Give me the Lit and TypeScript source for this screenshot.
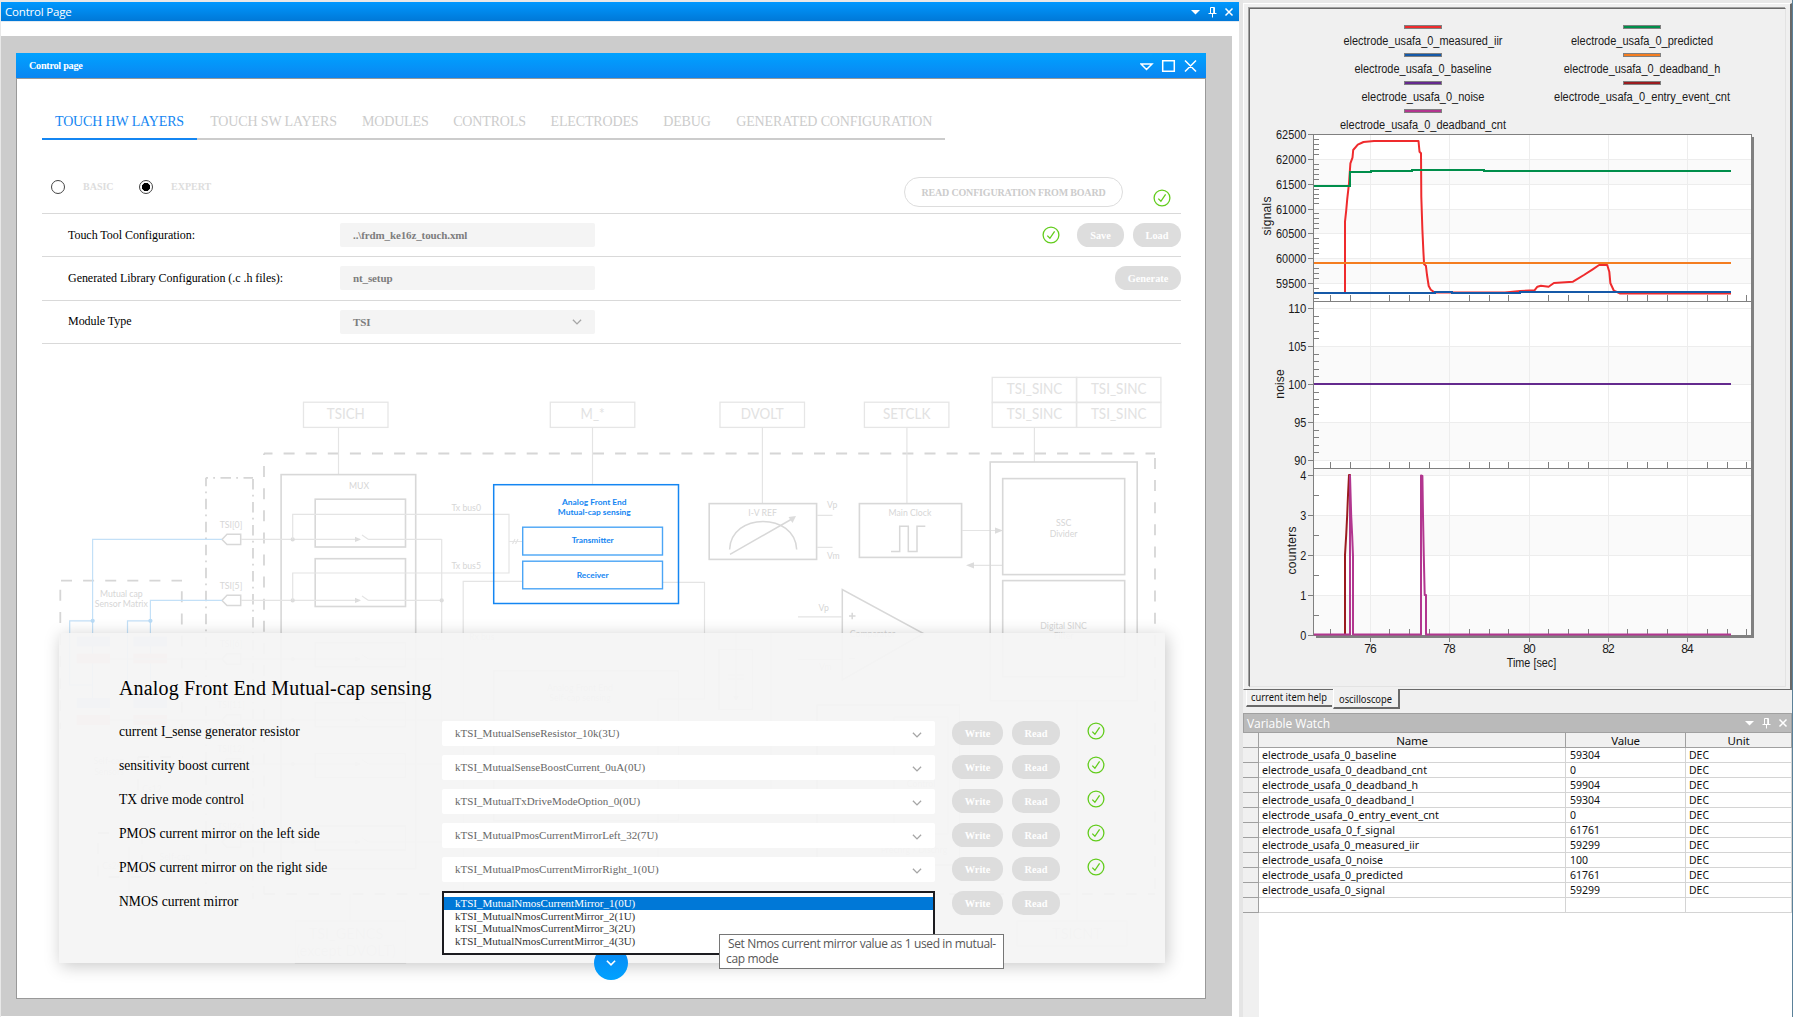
import { LitElement, html, svg, css } from "lit";
import { customElement } from "lit/decorators.js";

const TABS: [string, number][] = [
  ["TOUCH HW LAYERS", 155],
  ["TOUCH SW LAYERS", 153],
  ["MODULES", 90.5],
  ["CONTROLS", 98],
  ["ELECTRODES", 112],
  ["DEBUG", 73],
  ["GENERATED CONFIGURATION", 221.5],
];

const PARAMS = [
  ["current I_sense generator resistor", "kTSI_MutualSenseResistor_10k(3U)"],
  ["sensitivity boost current", "kTSI_MutualSenseBoostCurrent_0uA(0U)"],
  ["TX drive mode control", "kTSI_MutualTxDriveModeOption_0(0U)"],
  ["PMOS current mirror on the left side", "kTSI_MutualPmosCurrentMirrorLeft_32(7U)"],
  ["PMOS current mirror on the right side", "kTSI_MutualPmosCurrentMirrorRight_1(0U)"],
];

const OPTIONS = [1, 2, 3, 4].map((n) => `kTSI_MutualNmosCurrentMirror_${n}(${n - 1}U)`);

const WATCH = [
  ["electrode_usafa_0_baseline", "59304", 134.4],
  ["electrode_usafa_0_deadband_cnt", "0", 165],
  ["electrode_usafa_0_deadband_h", "59904", 156],
  ["electrode_usafa_0_deadband_l", "59304", 152],
  ["electrode_usafa_0_entry_event_cnt", "0", 177],
  ["electrode_usafa_0_f_signal", "61761", 133],
  ["electrode_usafa_0_measured_iir", "59299", 157],
  ["electrode_usafa_0_noise", "100", 121],
  ["electrode_usafa_0_predicted", "61761", 141],
  ["electrode_usafa_0_signal", "59299", 123],
] as [string, string, number][];

const check = html`<svg class="check" width="18" height="18" viewBox="0 0 18 18">
  <circle cx="9" cy="9" r="7.9" /><path d="M5.3 9.6 7.9 12.3 12.6 5.3" />
</svg>`;

const chevron = html`<svg class="chevron" width="12" height="8" viewBox="0 0 12 8"><path d="M1.900 1.700 6 5.900 10.100 1.700" /></svg>`;

const dockIcons = html`<svg class="dock-icons" width="44" height="12" viewBox="0 0 44 12">
  <path class="solid" d="M0 4H9L4.500 8.500Z" />
  <path d="M19.500 7V1.500H23.500V7M17.500 7.500H25.500M21.500 7.500V11.500M22.700 2V7" />
  <path class="cross" d="M34.500 2.500 41.500 9.500M41.500 2.500 34.500 9.500" />
</svg>`;

@customElement("block-diagram")
export class BlockDiagram extends LitElement {
  static styles = css`
    :host { display: block; }
    svg { display: block; font-family: Lato, "Open Sans", sans-serif; }
    .tag { fill: none; stroke: #e6e6e6; stroke-width: 1.3; }
    .box { fill: none; stroke: #d8d8d8; stroke-width: 1.6; }
    .wire { fill: none; stroke: #e4e4e4; stroke-width: 1.2; }
    .blue { fill: none; stroke: #c3e0f7; stroke-width: 1.2; }
    .dot { fill: #dcdcdc; }
    .bdot { fill: #b9dbf6; }
    .dash { fill: none; stroke: #d6d6d6; stroke-width: 1.8; stroke-dasharray: 11 11.1; }
    .dashdot { fill: none; stroke: #d6d6d6; stroke-width: 1.8; stroke-dasharray: 10.5 5.2 1.8 5.5; }
    .big { font-size: 14.500px; fill: #e2e2e2; text-anchor: middle; }
    .small { font-size: 8.700px; fill: #d6d6d6; text-anchor: middle; }
    .left { font-size: 8.700px; fill: #d6d6d6; }
    .afe { fill: #fff; fill-opacity: 0; stroke: #1486f2; stroke-width: 1.5; }
    .afe-in { fill: #fff; stroke: #4ba5f6; stroke-width: 1.4; }
    .afe-text { font-size: 8.200px; font-weight: 700; fill: #1486f2; text-anchor: middle; }
    .blue-pad { fill: #cfe0f5; }
    .red-pad { fill: #fad2d2; }
    .shape { fill: none; stroke: #d8d8d8; stroke-width: 1.5; }
  `;

  private tag(x: number, y: number, label: string, w: number) {
    return svg`<rect class="tag" x=${x} y=${y} width="84.500" height="25.200" />
      <text class="big" x=${x + 42.3} y=${y + 17} textLength=${w} lengthAdjust="spacingAndGlyphs">${label}</text>`;
  }

  private pin(y: number, label: string, wireEnd = 441.7) {
    return svg`<text class="small" x="231" y=${y - 11.8}>${label}</text>
      <path class="shape" d=${`M222 ${y}L227 ${y - 5.2}H240.700V${y + 5.2}H227Z`} />
      <path class="wire" d=${`M241 ${y}H360M368.500 ${y}H${wireEnd}M368.500 ${y}L362 ${y - 4.3}`} />
      <path class="dot" d=${`M355 ${y - 2.6}L361 ${y}L355 ${y + 2.6}Z`} />
      <circle class="dot" cx="292.700" cy=${y} r="2.100" />`;
  }

  render() {
    return html`<svg width="1188" height="640" viewBox="17 345 1188 640">
      <path class="dash" stroke-dashoffset="2.500" d="M264 454.500H1155" />
      <path class="dash" stroke-dashoffset="9.500" d="M264 454.500V895" />
      <path class="dash" stroke-dashoffset="17.600" d="M1155 454.500V895" />
      <path class="dash" d="M264 895H1155" />
      <path class="dashdot" stroke-dashoffset="2" d="M206 478.800V900" />
      <path class="dashdot" stroke-dashoffset="8.500" d="M206 478.800H253" />
      <path class="dashdot" stroke-dashoffset="0" d="M253 480V900" />
      <path class="dash" d="M61 581.700H182" />
      <path class="dash" stroke-dashoffset="13" d="M60.300 581.700V730" />
      <path class="dash" stroke-dashoffset="11.500" d="M181.800 581.700V730" />

      ${this.tag(303.5, 403.2, "TSICH", 38)}
      ${this.tag(550.3, 403.2, "M_*", 24)}
      ${this.tag(720, 403.2, "DVOLT", 43)}
      ${this.tag(864.4, 403.2, "SETCLK", 47.5)}
      ${this.tag(992.2, 403.2, "TSI_SINC", 55.5)}
      ${this.tag(1076.4, 403.2, "TSI_SINC", 55.5)}
      ${this.tag(992.2, 378.4, "TSI_SINC", 55.5)}
      ${this.tag(1076.4, 378.4, "TSI_SINC", 55.5)}
      <path class="wire" d="M338.500 428.500V475M592.500 428.500V485M762.400 428.500V504M906.900 428.500V504M1034.400 428.500V463" />

      <rect class="box" x="281.100" y="475.600" width="134.600" height="394" />
      <text class="small" x="359" y="490">MUX</text>
      <rect class="box" x="315.200" y="500.200" width="90.300" height="47.800" />
      <rect class="box" x="315.200" y="559.700" width="90.300" height="47.800" />
      <rect class="box" x="315.200" y="643.600" width="90.300" height="24" />
      <rect class="box" x="315.200" y="703.600" width="90.300" height="24" />
      <rect class="box" x="315.200" y="754.500" width="90.300" height="24" />
      <rect class="box" x="315.200" y="827" width="90.300" height="24" />
      ${this.pin(540.4, "TSI[0]")}
      ${this.pin(601.4, "TSI[5]")}
      ${this.pin(660, "TSI[6]", 444)}
      ${this.pin(721, "TSI[11]", 510)}
      ${this.pin(765, "TSI[12]", 500)}
      ${this.pin(843, "TSI[24]", 460)}
      <path class="wire" d="M292.700 540V515.400H509V574H292.700V601M509 542.500H522M512.500 545L515 540M515.500 545L518 540M441.700 540V727M463.200 900V582.300H522M662.600 583.400H704.500V700H658V870" />
      <circle class="dot" cx="441.700" cy="601.400" r="2.100" />
      <text class="left" x="451.500" y="512.200">Tx bus0</text>
      <text class="left" x="451.500" y="569.600">Tx bus5</text>
      <text class="left" x="469" y="641">Rx bus</text>

      <path class="blue" d="M222 540.400H92.600V700M92.600 621.800H69.700V686H92M222 601.400H150.400V700M150.400 621.800H127.500V686" />
      <circle class="bdot" cx="92.700" cy="621.800" r="2.100" />
      <circle class="bdot" cx="150.400" cy="621.800" r="2.100" />
      <text class="small" x="121.300" y="597.700">Mutual cap</text>
      <text class="small" x="121.300" y="607.700">Sensor Matrix</text>
      ${[76.6, 133.4].map((x) => svg`
        <rect class="blue-pad" x=${x} y="637.500" width="33.500" height="10" />
        <rect class="red-pad" x=${x} y="654.500" width="33.500" height="10" />
        <rect class="blue-pad" x=${x} y="699" width="33.500" height="10" />
        <rect class="red-pad" x=${x} y="716" width="33.500" height="10" />`)}
      <path class="wire" d="M110 660H222M110 721H222M163 765H222M330 870H408M129 848V893" />
      <text class="small" x="109" y="765">Self-cap</text>
      <text class="small" x="109" y="776">Sensors</text>
      <text class="small" x="152" y="793">Cs12</text>
      <text class="small" x="175" y="861">Self-cap</text>
      <text class="small" x="112" y="870">Cs24</text>
      <path class="dash" d="M138 758H183M138 758V800M98 834H142V878H98Z" />

      <rect class="afe" x="493.700" y="485.700" width="184.800" height="118.800" />
      <rect class="afe-in" x="522.700" y="528.200" width="139.800" height="27.800" />
      <rect class="afe-in" x="522.700" y="562.200" width="139.800" height="27.600" />
      <text class="afe-text" x="594.300" y="505.600" textLength="64.500" lengthAdjust="spacingAndGlyphs">Analog Front End</text>
      <text class="afe-text" x="594.300" y="516" textLength="73" lengthAdjust="spacingAndGlyphs">Mutual-cap sensing</text>
      <text class="afe-text" x="592.700" y="544.400" textLength="42" lengthAdjust="spacingAndGlyphs">Transmitter</text>
      <text class="afe-text" x="592.700" y="578.700" textLength="32" lengthAdjust="spacingAndGlyphs">Receiver</text>
      <rect class="box" x="493.700" y="671.700" width="184.800" height="150" />
      <text class="small" x="580" y="692">Analog Front End</text>
      <text class="small" x="580" y="702">Self-cap sensing</text>

      <rect class="box" x="709.200" y="504.600" width="107.400" height="55.800" />
      <text class="small" x="762.600" y="517">I-V REF</text>
      <path class="shape" d="M729.600 550.500C731 513 795 513 796.700 550.500M730 555.300L791 520.500" />
      <path class="dot" d="M796 517L792.500 524L788.500 518Z" />
      <path class="wire" d="M817 516.400H832.500M817 548.400H832.500" />
      <text class="left" x="827" y="508.500">Vp</text>
      <text class="left" x="827" y="560">Vm</text>

      <rect class="box" x="859.400" y="504.600" width="102.200" height="53.800" />
      <text class="small" x="910" y="517">Main Clock</text>
      <path class="shape" d="M891 552.500H899.700V527.300H908.300V552.500H917V527.300H925.300" />
      <path class="wire" d="M962 531.500H996M974 566.300H1003" />
      <path class="dot" d="M1003 531.500L995 528.500V534.800ZM966 566.300L974 563.200V569.500Z" />

      <path class="shape" d="M842.300 590.500V681L923.500 634.500Z" />
      <path class="wire" d="M798 617.800H842M798 660.500H842" />
      <path class="shape" d="M849 617H855.500M852.200 613.800V620.300M849 659.500H855" />
      <text class="left" x="818.500" y="611.500">Vp</text>
      <text class="left" x="819" y="671">Vm</text>
      <text class="small" x="872.500" y="638.300">Comparator</text>

      <rect class="box" x="990.200" y="463" width="147" height="238.700" />
      <rect class="box" x="1002.700" y="479.600" width="122" height="96" />
      <rect class="box" x="1002.700" y="581.600" width="122" height="96" />
      <text class="small" x="1063.600" y="527.200">SSC</text>
      <text class="small" x="1063.600" y="537.500">Divider</text>
      <text class="small" x="1063.600" y="629.800">Digital SINC</text>
      <text class="small" x="1063.600" y="640">Filter</text>

      <rect class="box" x="719" y="650.500" width="33.500" height="60" />
      <path class="wire" d="M736 634V698M728 676H744M728 680H744M771 634V800M1077 702V922M350 895V922" />
      <path class="dot" d="M733 697H739L736 702Z" />
      <rect class="box" x="817" y="706" width="142.500" height="160" />
      <rect class="wire" x="894" y="718" width="54" height="117" />
      <text class="small" x="921" y="788">Control</text>
      <text class="small" x="914" y="854">Prechrg / Dischrg</text>
      <rect class="tag" x="295.500" y="922" width="110" height="42" />
      <text class="big" x="346" y="939.500">TSI_GENCS</text>
      <text class="big" x="346" y="956.500">(except DVOLT)</text>
      <rect class="tag" x="1017" y="922" width="110" height="25" />
      <text class="big" x="1077" y="939.500">TSICNT</text>
    </svg>`;
  }
}

@customElement("scope-chart")
export class ScopeChart extends LitElement {
  static styles = css`
    :host { display: block; }
    svg { display: block; font: 12px "Liberation Sans", Arial, sans-serif; }
    text { fill: #1a1a1a; }
    .mid { text-anchor: middle; }
    .end { text-anchor: end; }
    .plot { fill: #fff; }
    .shade { fill: #808080; }
    .band { fill: #fafafa; }
    .grid { fill: none; stroke: #ededed; shape-rendering: crispEdges; }
    .axis { fill: none; stroke: #808080; shape-rendering: crispEdges; }
    .swatch { stroke: #808080; shape-rendering: crispEdges; }
    .trace { fill: none; stroke-width: 2; stroke-linejoin: round; }
    .flat { shape-rendering: crispEdges; }
  `;

  private legend: [number, number, string, string, number][] = [
    [182.5, 27, "#ef2b2d", "electrode_usafa_0_measured_iir", 159],
    [401.5, 27, "#008e4b", "electrode_usafa_0_predicted", 142],
    [182.5, 55, "#1559a8", "electrode_usafa_0_baseline", 137],
    [401.5, 55, "#f47d20", "electrode_usafa_0_deadband_h", 156.5],
    [182.5, 83, "#642a8e", "electrode_usafa_0_noise", 123],
    [401.5, 83, "#9a1b1f", "electrode_usafa_0_entry_event_cnt", 176],
    [182.5, 111, "#b2368f", "electrode_usafa_0_deadband_cnt", 166],
  ];

  render() {
    const labels: [number, string][] = [
      [134.5, "62500"], [159.5, "62000"], [184.5, "61500"], [209.5, "61000"], [233.5, "60500"], [258.5, "60000"], [283.5, "59500"],
      [308.5, "110"], [346.5, "105"], [384.5, "100"], [422.5, "95"], [460.5, "90"],
      [475.5, "4"], [515.5, "3"], [555.5, "2"], [595.5, "1"], [635.5, "0"],
    ];
    const years: [number, string][] = [[130.5, "76"], [209.5, "78"], [289.5, "80"], [368.5, "82"], [447.5, "84"]];
    const minorY: number[] = [];
    for (let i = 0; i < 34; i++) if (i % 5) minorY.push(134.5 + i * 4.96);
    for (let i = 1; i < 20; i++) if (i % 5) minorY.push(308.5 + i * 7.6);
    minorY.push(495.5, 535.5, 575.5, 615.5);
    const minorX: number[] = [];
    for (let i = 0; i < 22; i++) if ((i + 1) % 4 !== 3) minorX.push(90.5 + i * 19.83);
    const bands = [[159, 25], [209, 24], [258, 25], [346, 38], [422, 38], [469, 6], [515, 40], [595, 40]];
    return html`<svg width="536" height="677" viewBox="10 9 536 677">
      ${this.legend.map(([x, y, color, name, w]) => svg`
        <rect class="swatch" x=${x - 18} y=${y - 1.5} width="37" height="3" fill=${color} />
        <text class="mid" x=${x + 0.5} y=${y + 18} textLength=${w} lengthAdjust="spacingAndGlyphs">${name}</text>`)}
      <path class="shade" d="M511 137H514V638H76V635H511Z" />
      <rect class="plot" x="73.500" y="134.500" width="437.500" height="500.500" />
      ${bands.map(([y, h]) => svg`<rect class="band" x="74" y=${y} width="437" height=${h} />`)}
      ${labels.map(([y]) => svg`<path class="grid" d=${`M74 ${y}H511`} />`)}
      ${years.map(([x]) => svg`<path class="grid" d=${`M${x} 135V635`} />`)}
      <path class="axis" d="M73.500 635V134.500H511.500V635M73.500 301.500H511M73.500 468.500H511M73.500 635.500H511" />
      ${labels.map(([y, t]) => svg`<path class="axis" d=${`M68 ${y}H74`} />
        <text class="end" x="66.300" y=${y + 4.2} textLength=${t.length * 6.05} lengthAdjust="spacingAndGlyphs">${t}</text>`)}
      ${minorY.map((y) => svg`<path class="axis" d=${`M74 ${y}H79`} />`)}
      ${minorX.map((x) => svg`<path class="axis" d=${`M${x} 295V301M${x} 462V468M${x} 629V635`} />`)}
      ${years.map(([x, t]) => svg`<path class="axis" d=${`M${x} 635V642`} /><text class="mid" x=${x} y="653" textLength="12.300">${t}</text>`)}
      <text class="mid" x="291.500" y="667" textLength="49.500" lengthAdjust="spacingAndGlyphs">Time [sec]</text>
      <text class="mid" transform="translate(31 216) rotate(-90)" textLength="39">signals</text>
      <text class="mid" transform="translate(43.500 384) rotate(-90)" textLength="29.500">noise</text>
      <text class="mid" transform="translate(55.500 550.500) rotate(-90)" textLength="48">counters</text>

      <path class="trace" stroke="#ef2b2d" d="M105 293V221.700L106.200 210.700 107.200 199.300 109 183.300 110.400 163.300 112.500 157.700 113.200 150 117.800 144.700 123.500 142 134 141H178.500L179.500 151.700 181 153.300 181.300 196.700 182.400 230 183.400 251.700 184.100 264.300 185.900 265.700 187 275 188.700 286 190.800 289.700 194.700 292.500 265 292.500 280.400 291 294.500 290.300 297.400 286.700 300.900 285.700 308.600 286.700 313.900 283 333 281.700 343.900 275 352.700 269.300 359.100 265H367.200L369.300 271.700 370.400 283.300 373.900 290.700 380.200 293.500H491" />
      <path class="trace flat" stroke="#008e4b" d="M74 186H110V172H131V171H172V170H244V171H491" />
      <path class="trace flat" stroke="#f47d20" d="M74 263H491" />
      <path class="trace flat" stroke="#1559a8" d="M74 293H195V292H212V293H280V292H491" />
      <path class="trace flat" stroke="#642a8e" d="M74 384H491" />
      <path class="trace" stroke="#9a1b1f" d="M105 635V555L106.200 535 107.200 515 108 495 109 475H110V635" />
      <path class="trace" stroke="#b2368f" d="M74 634.500H110V475.500L111.200 516 112.200 536 113 556V634.500H181V475.500L182.400 476 183 516 183.800 556 184.700 595H186V634.500H491" />
    </svg>`;
  }
}

@customElement("app-root")
export class AppRoot extends LitElement {
  static styles = css`
    :host { display: block; width: 1793px; height: 1017px; overflow: hidden; }
    * { box-sizing: border-box; }
    .app { display: grid; grid-template-columns: 1239px 4px 550px; height: 1017px; background: #e5e5e5; }
    .dock { display: flex; flex-direction: column; padding: 2px 0 0 1px; background: #e8e8e8; }
    .bar { display: flex; align-items: center; justify-content: space-between; height: 19px; padding: 0 4px 0 4px; color: #fff; font: 11.500px/19px "Open Sans", "Noto Sans", sans-serif; letter-spacing: -0.190px; background: linear-gradient(#0098ff, #0078d7); }
    .dock-icons { display: block; fill: none; stroke: #fff; stroke-width: 1; }
    .dock-icons .solid { fill: #fff; stroke: none; }
    .dock-icons .cross { stroke-width: 1.500; }
    .dock-body { flex: 1; padding: 14px 7px 1px 0; background: #fff; border-top: 1px solid #e2eaf2; }
    .desk { height: 980px; padding: 17px 26px 17px 15px; background: #ccc; }
    .window { display: flex; flex-direction: column; height: 946px; font-family: "Liberation Serif", "Times New Roman", serif; }
    .win-title { display: flex; justify-content: space-between; align-items: center; height: 25px; padding: 0 9px 0 13px; color: #fff; font-size: 10.200px; font-weight: 700; letter-spacing: -0.270px; background: linear-gradient(#00a2ff, #0a86f2); }
    .win-icons { fill: none; stroke: #fff; stroke-width: 1.500; }
    .win-body { flex: 1; padding: 0 24px 0 25px; border: 1px solid #999; background: #fff; overflow: hidden; }
    .tabs { display: flex; width: 903px; margin-top: 25px; border-bottom: 2px solid #ccc; }
    .tab { flex: none; height: 36px; padding: 9px 0 0; margin-bottom: -2px; border-bottom: 2px solid transparent; font-size: 14px; line-height: 17px; color: #ccc; white-space: nowrap; text-align: center; letter-spacing: -0.150px; }
    .tab.on { color: #1486f2; border-color: #1486f2; }
    .mode { display: flex; height: 73px; align-items: center; padding: 20px 10px 0 9px; font-size: 10px; font-weight: 700; color: #ddd; }
    .radio { flex: none; width: 14px; height: 14px; border: 1px solid #444; border-radius: 50%; background: #fff; }
    .radio.on { background: radial-gradient(circle, #000 3.800px, #fff 4.400px); }
    .mode span { flex: none; width: 74px; padding-left: 18px; }
    .outline { display: flex; align-items: center; justify-content: center; width: 219px; height: 30px; margin: 11px 30px 0 auto; border: 1px solid #ddd; border-radius: 15px; color: #ccc; letter-spacing: -0.170px; }
    .mode .check { margin-top: 23px; }
    .check { display: block; flex: none; fill: none; stroke: #62cc1c; stroke-width: 1.300; }
    .chevron { display: block; fill: none; stroke: #a6a6a6; stroke-width: 1.300; }
    .rows { width: 1139px; border-bottom: 1px solid #d9d9d9; }
    .row { display: grid; grid-template-columns: 272px 255px 1fr; align-items: center; width: 1139px; height: 43.300px; padding-left: 26px; border-top: 1px solid #d9d9d9; font-size: 12px; letter-spacing: -0.040px; }
    .field { display: flex; align-items: center; justify-content: space-between; height: 24px; padding: 0 12px 0 13px; border-radius: 2px; background: #f4f4f4; color: #7d7d7d; font-size: 11px; font-weight: 700; letter-spacing: -0.120px; }
    .acts { display: flex; justify-content: flex-end; align-items: center; gap: 9px; }
    .acts .check { margin-right: 8px; }
    .pill { display: flex; align-items: center; justify-content: center; height: 24px; border-radius: 11.500px; background: #ddd; color: #fff; font-size: 10.300px; font-weight: 700; letter-spacing: 0; }
    .w47 { width: 47px; } .w48 { width: 48px; } .w51 { width: 51px; } .w66 { width: 66px; }
    .stage { display: grid; margin: 0 -24px 0 -25px; width: 1188px; }
    .stage > * { grid-area: 1 / 1; }
    .sheet { width: 1106px; height: 330px; margin: 289px 0 0 42px; padding: 43px 0 0 60px; background: rgba(244, 244, 244, 0.930); box-shadow: 2px 3px 16px rgba(0, 0, 0, 0.220); }
    .sheet h2 { margin: 0; height: 45px; font-size: 20px; line-height: 24px; font-weight: 400; letter-spacing: 0.170px; }
    .param { display: grid; grid-template-columns: 323px 493px 17px 51px 9px 48px 27px 18px; align-items: center; height: 34px; padding-bottom: 9px; font-size: 13.600px; }
    .name { padding-bottom: 2px; }
    .param .field { height: 25px; background: #fff; font-weight: 400; color: #666; letter-spacing: 0.020px; }
    .param .chevron { margin-top: 3px; }
    .param .check { margin-top: -4px; }
    .c4 { grid-column: 4; } .c6 { grid-column: 6; } .c8 { grid-column: 8; }
    .combo { position: relative; height: 25px; }
    .list { position: absolute; left: 0; top: 0; z-index: 3; width: 493px; height: 64px; padding: 4px 0; border: 2px solid #1c1c20; background: #fff; font-size: 11px; line-height: 12.800px; color: #333; }
    .opt { height: 12.800px; padding-left: 11px; }
    .opt.on { background: #0078d7; color: #fff; }
    .tip { position: absolute; left: 277px; top: 43px; z-index: 4; width: 285px; height: 35px; padding: 1px 6px; border: 1px solid #767676; background: #fff; color: #575757; font: 12px/15px "Open Sans", "Noto Sans", sans-serif; letter-spacing: -0.370px; text-indent: 2px; white-space: nowrap; }
    .more { position: absolute; left: 152px; top: 55px; z-index: 2; display: flex; align-items: center; justify-content: center; width: 34px; height: 34px; border-radius: 50%; background: linear-gradient(#0a86f2, #00a2ff); }
    .more .chevron { stroke: #fff; stroke-width: 1.600; margin-top: 1px; }

    .side { display: flex; flex-direction: column; background: #e8e8e8; border-right: 1px solid #5b8199; font-family: "Noto Sans", "Open Sans", sans-serif; }
    .scope { height: 687px; margin-top: 3px; padding: 4px 4px 3px 5px; background: #f0f0f0; border: 1px solid #fff; border-right: 2px solid #696969; border-bottom: 1px solid #696969; }
    .frame { height: 679px; border: 1px solid #696969; box-shadow: -1px -1px #a0a0a0; border-right-color: #e3e3e3; border-bottom-color: #e3e3e3; }
    .sheets { display: flex; height: 23px; padding-left: 3px; background: #f0f0f0; }
    .sheet-tab { width: 86px; height: 17px; padding-left: 4px; border: 1px solid #fff; border-top: 0; border-right: 0; border-bottom: 2px solid #696969; background: #f0f0f0; }
    .sheet-tab.on { width: 67px; height: 20px; margin-top: -1px; padding-left: 5px; border-right: 2px solid #696969; margin-left: 1px; padding-top: 3px; }
    .t { display: block; overflow: visible; }
    .t text { font-family: "Noto Sans", "Open Sans", sans-serif; font-size: 11.500px; fill: #111; }
    .watch-bar { height: 20px; padding: 0 2px 0 3px; border: 1px solid #a0a0a0; background: #bababa; font-size: 12px; letter-spacing: -0.050px; }
    .table { flex: 1; display: grid; grid-template-columns: 16px 307px 120px 106px; grid-auto-rows: 15px; align-content: start; background: linear-gradient(90deg, #f0f0f0 16px, #fff 16px); }
    .th { background: #f0f0f0; border-right: 1px solid #a0a0a0; border-bottom: 1px solid #a0a0a0; text-align: center; font-size: 11.500px; line-height: 16px; letter-spacing: -0.200px; color: #111; white-space: nowrap; }
    .td { border-right: 1px solid #d4d4d4; border-bottom: 1px solid #d4d4d4; padding-left: 3px; }
    .td.num { padding-left: 4px; }
  `;

  private fit(text: string, w: number, base = 11) {
    return html`<svg class="t" width=${Math.ceil(w) + 2} height="14">
      <text x="0" y=${base} textLength=${w} lengthAdjust="spacingAndGlyphs">${text}</text></svg>`;
  }

  private pills() {
    return html`<div class="pill w51 c4">Write</div><div class="pill w48 c6">Read</div>`;
  }

  render() {
    return html`<div class="app">
      <section class="dock">
        <div class="bar"><span>Control Page</span>${dockIcons}</div>
        <div class="dock-body"><div class="desk"><div class="window">
          <div class="win-title"><span>Control page</span>
            <svg class="win-icons" width="57" height="14" viewBox="0 0 57 14">
              <path d="M1 5H12L6.500 10.500ZM22.700 1.700H34.300V12.300H22.700ZM45 1.500 56 12.500M56 1.500 45 12.500" />
            </svg></div>
          <div class="win-body">
            <nav class="tabs">${TABS.map(([t, w], i) => html`<div class="tab ${i ? "" : "on"}" style="width:${w}px">${t}</div>`)}</nav>
            <div class="mode">
              <i class="radio"></i><span>BASIC</span>
              <i class="radio on"></i><span>EXPERT</span>
              <div class="outline">READ CONFIGURATION FROM BOARD</div>${check}
            </div>
            <div class="rows">
              <div class="row"><div>Touch Tool Configuration:</div><div class="field">..\\frdm_ke16z_touch.xml</div>
                <div class="acts">${check}<div class="pill w47">Save</div><div class="pill w48">Load</div></div></div>
              <div class="row"><div>Generated Library Configuration (.c .h files):</div><div class="field">nt_setup</div>
                <div class="acts"><div class="pill w66">Generate</div></div></div>
              <div class="row"><div>Module Type</div><div class="field">TSI${chevron}</div></div>
            </div>
            <div class="stage">
              <block-diagram></block-diagram>
              <div class="sheet">
                <h2>Analog Front End Mutual-cap sensing</h2>
                ${PARAMS.map(([label, value]) => html`<div class="param"><div class="name">${label}</div>
                  <div class="field">${value}${chevron}</div>${this.pills()}<div class="c8">${check}</div></div>`)}
                <div class="param"><div class="name">NMOS current mirror</div>
                  <div class="combo">
                    <div class="more">${chevron}</div>
                    <div class="list">${OPTIONS.map((o, i) => html`<div class="opt ${i ? "" : "on"}">${o}</div>`)}</div>
                    <div class="tip">Set Nmos current mirror value as 1 used in mutual-<br />cap mode</div>
                  </div>${this.pills()}</div>
              </div>
            </div>
          </div>
        </div></div></div>
      </section>
      <i></i>
      <section class="side">
        <div class="scope"><div class="frame"><scope-chart></scope-chart></div></div>
        <div class="sheets">
          <div class="sheet-tab">${this.fit("current item help", 76)}</div>
          <div class="sheet-tab on">${this.fit("oscilloscope", 53)}</div>
        </div>
        <div class="bar watch-bar"><span>Variable Watch</span>${dockIcons}</div>
        <div class="table">
          <div class="th"></div><div class="th">Name</div><div class="th">Value</div><div class="th">Unit</div>
          ${WATCH.map(([n, v, w]) => html`<div class="th"></div><div class="td">${this.fit(n, w)}</div>
            <div class="td num">${this.fit(v, v.length * 6)}</div><div class="td">${this.fit("DEC", 20)}</div>`)}
          <div class="th"></div><div class="td"></div><div class="td"></div><div class="td"></div>
        </div>
      </section>
    </div>`;
  }
}
